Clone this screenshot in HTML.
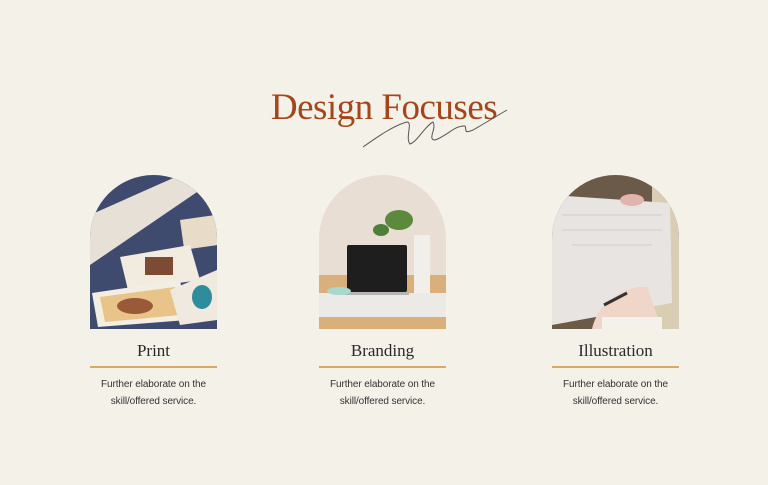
<!DOCTYPE html>
<html><head><meta charset="utf-8"><style>
html,body{margin:0;padding:0;background:#f4f1e9;width:768px;height:485px;overflow:hidden;position:relative}
h1{position:absolute;left:0;width:768px;top:86px;margin:0;text-align:center;font:400 37px "Liberation Serif",serif;color:#a4461c;letter-spacing:-0.5px}
.card{position:absolute;top:175px;width:127px}
.card svg.img{display:block;width:127px;height:154px}
.t{text-align:center;font:400 17px "Liberation Serif",serif;color:#2a2a2a;margin-top:12px;height:22px}
.ln{height:2px;background:#d8a96a;margin-top:3px}
.d{text-align:center;font:400 10px "Liberation Sans",sans-serif;color:#333;line-height:17px;margin-top:8px;letter-spacing:-0.1px}
</style></head><body>
<h1>Design Focuses</h1>
<svg style="position:absolute;left:355px;top:100px" width="160" height="55" viewBox="0 0 160 55"><path d="M8 47 C25 35 40 25 52 22 C58 22 50 38 55 44 C62 42 70 26 78 22 C82 28 72 40 80 40 C92 36 100 25 110 26 C112 30 108 34 118 30 C132 22 145 14 152 10" fill="none" stroke="#555" stroke-width="1"/></svg>

<div class="card" style="left:90px">
<svg class="img" viewBox="0 0 127 154"><defs><clipPath id="a1"><path d="M0 154V63.5A63.5 63.5 0 0 1 127 63.5V154Z"/></clipPath></defs>
<g clip-path="url(#a1)"><rect width="127" height="154" fill="#3e4a6e"/>
<polygon points="0,40 90,0 110,15 0,90" fill="#e6e0d6"/>
<rect x="90" y="45" width="40" height="30" fill="#e8dcc8" transform="rotate(-8 90 45)"/>
<polygon points="30,82 100,70 110,105 38,115" fill="#f1ebe0"/>
<rect x="55" y="82" width="28" height="18" fill="#7d4a33"/>
<polygon points="2,118 90,105 97,145 8,152" fill="#f3ede2"/>
<polygon points="10,122 85,112 90,140 15,147" fill="#e8c48a"/>
<ellipse cx="45" cy="131" rx="18" ry="8" fill="#9a5a3a"/>
<polygon points="80,115 127,95 127,145 90,150" fill="#efe9df"/>
<ellipse cx="112" cy="122" rx="10" ry="12" fill="#2f8c9a"/></g></svg>
<div class="t">Print</div><div class="ln"></div>
<div class="d">Further elaborate on the<br>skill/offered service.</div></div>

<div class="card" style="left:319px">
<svg class="img" viewBox="0 0 127 154"><defs><clipPath id="a2"><path d="M0 154V63.5A63.5 63.5 0 0 1 127 63.5V154Z"/></clipPath></defs>
<g clip-path="url(#a2)"><rect width="127" height="154" fill="#e9ded3"/>
<rect y="100" width="127" height="54" fill="#d9b07c"/>
<rect y="118" width="127" height="24" fill="#eceae6"/>
<rect x="95" y="60" width="16" height="58" fill="#f2efea"/>
<ellipse cx="80" cy="45" rx="14" ry="10" fill="#5b8a3e"/><ellipse cx="62" cy="55" rx="8" ry="6" fill="#4e7f36"/>
<rect x="28" y="70" width="60" height="47" rx="2" fill="#1e1e1e"/>
<rect x="24" y="117" width="66" height="3" fill="#b5b5b3"/>
<ellipse cx="20" cy="116" rx="12" ry="4" fill="#a8d8cf"/></g></svg>
<div class="t">Branding</div><div class="ln"></div>
<div class="d">Further elaborate on the<br>skill/offered service.</div></div>

<div class="card" style="left:552px">
<svg class="img" viewBox="0 0 127 154"><defs><clipPath id="a3"><path d="M0 154V63.5A63.5 63.5 0 0 1 127 63.5V154Z"/></clipPath></defs>
<g clip-path="url(#a3)"><rect width="127" height="154" fill="#6b5a48"/>
<rect x="100" y="0" width="27" height="154" fill="#d9cdb3"/>
<polygon points="0,20 118,28 120,128 0,150" fill="#e8e4e2"/>
<path d="M10 40h100M10 55h100M20 70h80" stroke="#bdb6b4" stroke-width="0.6"/>
<ellipse cx="80" cy="25" rx="12" ry="6" fill="#e2b4ae"/>
<path d="M40 154 C45 130 70 110 95 112 L110 154Z" fill="#efd6c9"/>
<rect x="50" y="142" width="60" height="14" fill="#f4f1ec"/>
<line x1="52" y1="130" x2="75" y2="118" stroke="#333" stroke-width="3"/></g></svg>
<div class="t">Illustration</div><div class="ln"></div>
<div class="d">Further elaborate on the<br>skill/offered service.</div></div>
</body></html>
